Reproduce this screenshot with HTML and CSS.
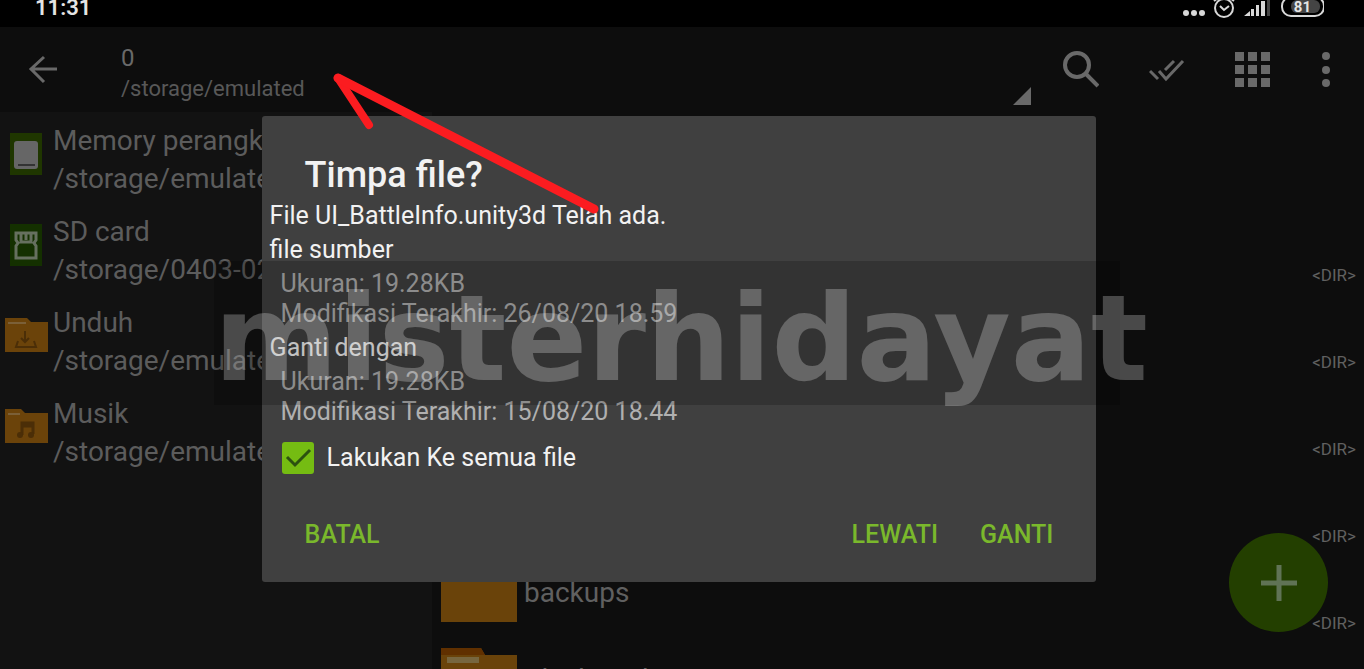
FILE: index.html
```html
<!DOCTYPE html>
<html lang="id">
<head>
<meta charset="utf-8">
<title>File manager</title>
<link rel="stylesheet" href="styles.css">
</head>
<body>
<header class="status">
  <time>11:31</time>
  <svg class="status-icons" viewBox="0 0 150 24" width="150" height="24" aria-hidden="true">
    <g fill="#d8d8d8"><circle cx="12" cy="13" r="3"/><circle cx="20" cy="13" r="3"/><circle cx="28" cy="13" r="3"/>
    <path d="M70 16l6-5v5zM77 9h3v7h-3zM82 5h3v11h-3zM87 1h4v15h-4z"/></g>
    <path d="M93 0h3v16h-3z" fill="#444"/>
    <g fill="none" stroke="#d8d8d8" stroke-width="2"><circle cx="50" cy="8" r="9"/><path d="M46 6l4 4 5-4M40 1l4-3M60 1l-4-3"/><rect x="108" y="-3" width="42" height="19" rx="9"/></g>
    <rect x="117" y="0" width="29" height="13" rx="6" fill="#444"/>
  </svg>
  <span class="battery">81</span>
</header>
<nav class="toolbar">
  <button class="icon-button back" aria-label="Kembali"><svg viewBox="0 0 32 32" width="32" height="32"><path d="M30 15H4M17 3L4 15l13 13" fill="none" stroke="currentColor" stroke-width="3"/></svg></button>
  <div class="location"><h1>0</h1><p>/storage/emulated</p><svg class="corner" viewBox="0 0 18 18" width="18" height="18" aria-hidden="true"><path d="M18 0v18H0z" fill="currentColor"/></svg></div>
  <div class="actions">
    <button class="icon-button" aria-label="Cari"><svg viewBox="0 0 38 38" width="38" height="38"><g fill="none" stroke="currentColor" stroke-width="4"><circle cx="16" cy="14" r="12"/><path d="M24 22l13 13"/></g></svg></button>
    <button class="icon-button" aria-label="Pilih semua"><svg viewBox="0 0 36 24" width="36" height="24"><path d="M1 13l8 8M10 13l7 8L34 3M16 12l9-9" fill="none" stroke="currentColor" stroke-width="3"/></svg></button>
    <button class="icon-button" aria-label="Tampilan"><svg viewBox="0 0 36 36" width="36" height="36" fill="currentColor"><path d="M0 0h9v9H0zM13 0h9v9H13zM26 0h9v9H26zM0 13h9v9H0zM13 13h9v9H13zM26 13h9v9H26zM0 26h9v9H0zM13 26h9v9H13zM26 26h9v9H26z"/></svg></button>
    <button class="icon-button" aria-label="Menu"><svg viewBox="0 0 10 38" width="10" height="38" fill="currentColor"><circle cx="5" cy="5" r="4"/><circle cx="5" cy="19" r="4"/><circle cx="5" cy="32" r="4"/></svg></button>
  </div>
</nav>
<div class="panes">
  <aside class="places">
    <a class="place" href="#memory"><svg viewBox="0 0 44 44" width="44" height="44"><path d="M6 1h32v42H6z" fill="#1f3600"/><rect x="10" y="9" width="24" height="28" rx="3" fill="#666"/><path d="M14 33h17" stroke="#333" stroke-width="2"/></svg><span>Memory perangkat<br>/storage/emulated/0</span></a>
    <a class="place" href="#sd"><svg viewBox="0 0 44 44" width="44" height="44"><path d="M6 1h32v42H6z" fill="#143000"/><path d="M12 10h20v7l-2 3 2 3v12H12V23l2-3-2-3zM17 10v9h10v-9M22 10v7" fill="none" stroke="#66705f" stroke-width="3"/></svg><span>SD card<br>/storage/0403-0201</span></a>
    <a class="place" href="#unduh"><svg viewBox="0 0 44 44" width="44" height="44"><path d="M1 4h22l4 4h17v30H1z" fill="#6b430a"/><path d="M4 9h18" stroke="#7b6038" stroke-width="2"/><path d="M21 17v11m-4-4l4 4 4-4M14 27l-2 6h20l-2-6" fill="none" stroke="#4b2e07" stroke-width="2"/></svg><span>Unduh<br>/storage/emulated/0</span></a>
    <a class="place" href="#musik"><svg viewBox="0 0 44 44" width="44" height="44"><path d="M1 4h16l4 4h23v30H1z" fill="#6b430a"/><path d="M4 9h12" stroke="#7b6038" stroke-width="2"/><path d="M18 30V18h11v11M18 21h11" fill="none" stroke="#4b2e07" stroke-width="3"/><circle cx="16" cy="30" r="3" fill="#4b2e07"/><circle cx="27" cy="30" r="3" fill="#4b2e07"/></svg><span>Musik<br>/storage/emulated/0</span></a>
  </aside>
  <main class="files">
    <ul>
      <li><b></b><small>&lt;DIR&gt;</small></li>
      <li><b></b><small>&lt;DIR&gt;</small></li>
      <li><b></b><small>&lt;DIR&gt;</small></li>
      <li><b></b><small>&lt;DIR&gt;</small></li>
      <li><svg viewBox="0 0 76 62" width="76" height="62"><path d="M0 0h42l4 8h30v54H0z" fill="#6a430a"/></svg><b>backups</b><small>&lt;DIR&gt;</small></li>
      <li><svg viewBox="0 0 76 62" width="76" height="62"><path d="M0 1h40l4 7h32v54H0z" fill="#6a430a"/><path d="M0 1h40l4 7H0z" fill="#603000"/><path d="M6 13h32" stroke="#77663f" stroke-width="6"/></svg><b>Blackmod</b></li>
    </ul>
  </main>
</div>
<button class="fab" aria-label="Tambah"><svg viewBox="0 0 36 36" width="36" height="36"><path d="M18 0v36M0 18h36" stroke="currentColor" stroke-width="5"/></svg></button>
<div class="overlay">
  <section class="dialog" role="dialog" aria-labelledby="dialog-title">
    <h2 id="dialog-title">Timpa file?</h2>
    <p>File UI_BattleInfo.unity3d Telah ada.</p>
    <h3>file sumber</h3>
    <p class="detail">Ukuran: 19.28KB<br>Modifikasi Terakhir: 26/08/20 18.59</p>
    <h3>Ganti dengan</h3>
    <p class="detail">Ukuran: 19.28KB<br>Modifikasi Terakhir: 15/08/20 18.44</p>
    <label class="apply"><input type="checkbox" checked><svg viewBox="0 0 32 32" width="32" height="32" aria-hidden="true"><path d="M5 15l8 8L28 8" fill="none" stroke="#2c5210" stroke-width="3"/></svg>Lakukan Ke semua file</label>
    <div class="buttons"><button>BATAL</button><button class="skip">LEWATI</button><button>GANTI</button></div>
  </section>
</div>
<div class="watermark">misterhidayat</div>
<svg class="arrow" viewBox="0 0 275 145" width="275" height="145" aria-hidden="true"><path d="M8 8l31 47" fill="none" stroke="#fb1c20" stroke-width="8" stroke-linecap="round"/><path d="M8 8l256 131" fill="none" stroke="#fb1c20" stroke-width="9" stroke-linecap="round"/></svg>
</body>
</html>
```
FILE: styles.css
```css
* { box-sizing: border-box; margin: 0; padding: 0; }
body {
  height: 100vh; overflow: hidden; position: relative;
  display: flex; flex-direction: column;
  background: #0d0d0d; color: #606060;
  font-family: Roboto, "Liberation Sans", sans-serif;
}
button { border: 0; background: none; color: inherit; font: inherit; }
svg { display: block; flex: none; }
.status {
  display: flex; align-items: flex-start; height: 27px; padding: 0 40px 0 35px;
  background: #000; color: #e4e4e4; position: relative;
}
.status time { font-size: 22px; line-height: 16px; font-weight: 600; flex: 1; }
.battery { position: absolute; right: 53px; top: 0; font-size: 15px; line-height: 15px; font-weight: 700; }
.toolbar { display: flex; height: 85px; padding-left: 27px; color: #696969; }
.icon-button { display: flex; align-items: center; justify-content: center; height: 85px; }
.location { flex: 1; position: relative; padding: 16px 0 0 62px; }
.location h1 { font-size: 24px; line-height: 30px; font-weight: 400; }
.location p { font-size: 22px; line-height: 32px; color: #585858; }
.corner { position: absolute; right: 0; bottom: 7px; }
.actions { display: flex; gap: 50px; padding: 0 33px 0 30px; }
.panes { display: flex; flex: 1; min-height: 0; overflow: hidden; }
.places { width: 432px; padding-top: 10px; background: #121212; }
.place {
  display: flex; gap: 5px; height: 91px; padding-left: 4px;
  color: #5c5c5c; text-decoration: none; font-size: 28px; line-height: 38px; white-space: nowrap;
}
.place svg { margin-top: 10px; }
.files { flex: 1; padding: 98px 8px 0 9px; }
.files ul { list-style: none; }
.files li { display: flex; gap: 7px; height: 87px; padding-top: 2px; }
.files b { flex: 1; font-size: 28px; font-weight: 400; line-height: 66px; }
.files small { font-size: 17px; line-height: 20px; margin-top: 53px; }
.fab {
  position: absolute; right: 36px; bottom: 37px; width: 99px; height: 99px;
  display: grid; place-items: center; border-radius: 50%; background: #233f00; color: #607355;
}
.overlay { position: absolute; inset: 0; display: grid; place-items: center; padding: 29px 6px 0 0; }
.dialog {
  width: 61.2vw; min-width: 560px; padding: 38px 7px 20px 8px; border-radius: 3px;
  background: #404040; color: #f2f2f2; font-size: 25px; line-height: 34px;
}
.dialog h2 { padding-left: 35px; margin-bottom: 3px; font-size: 36px; line-height: 42px; font-weight: 500; }
.dialog h3 { font-size: inherit; font-weight: 400; }
.detail { padding-left: 11px; line-height: 30px; color: #b0b0b0; margin: 2px 0; }
.apply { display: flex; align-items: center; gap: 13px; margin: 14px 0 0 12px; position: relative; }
.apply input { appearance: none; width: 32px; height: 32px; border-radius: 3px; background: #75bc12; }
.apply svg { position: absolute; left: 0; }
.buttons { display: flex; align-items: center; gap: 42px; padding: 43px 36px 10px 35px; color: #7ab82c; font-weight: 500; }
.skip { margin-left: auto; }
.watermark {
  position: absolute; left: 214px; right: 244px; top: 261px; padding-top: 12px;
  background: rgba(0, 0, 0, .2); color: rgba(255, 255, 255, .25);
  font: 700 119px/132px "DejaVu Sans", sans-serif; white-space: nowrap; pointer-events: none;
}
.arrow { position: absolute; left: 330px; top: 70px; pointer-events: none; }
```
